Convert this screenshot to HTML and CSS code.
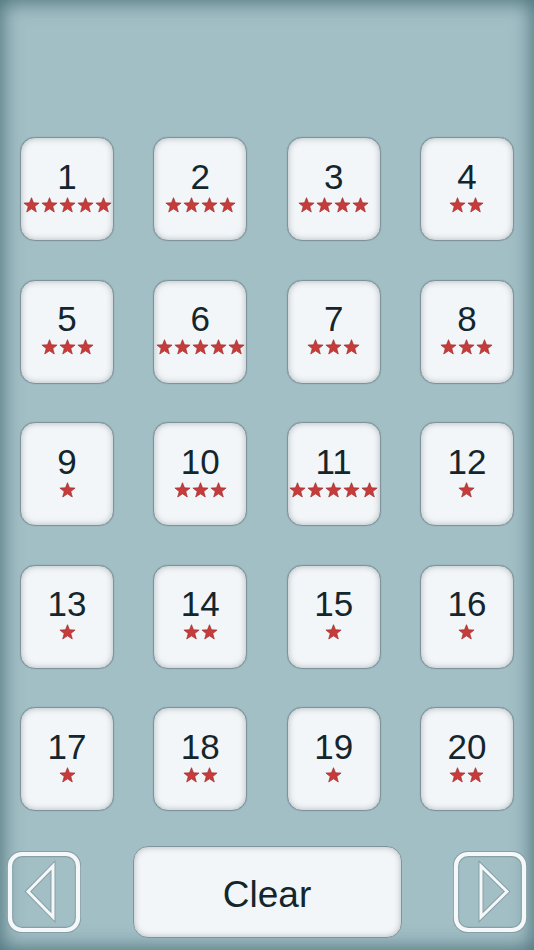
FILE: index.html
```html
<!DOCTYPE html>
<html>
<head>
<meta charset="utf-8">
<link rel="stylesheet" href="styles.css">
</head>
<body>
<svg class="defs" width="0" height="0">
  <defs>
    <symbol id="star" viewBox="0 0 20 19">
      <polygon points="10,0.8 12.4,6.9 19,7.2 13.9,11.3 15.7,17.8 10,14.1 4.3,17.8 6.1,11.3 1,7.2 7.6,6.9" fill="#c73b3b" stroke="#a02c2c" stroke-width="0.8" stroke-linejoin="round"/>
    </symbol>
  </defs>
</svg>
<div class="screen">
  <div class="grid" id="grid"></div>
  <div class="bar">
    <button class="nav">
      <svg width="74" height="82" viewBox="0 0 74 82">
        <rect x="3" y="3" width="68" height="76" rx="12" fill="none" stroke="#87a0a7" stroke-width="6.5"/>
        <rect x="3" y="3" width="68" height="76" rx="12" fill="none" stroke="#f5f8f9" stroke-width="4.2"/>
        <polygon points="21,40.5 46,15 46,66" fill="none" stroke="#87a0a7" stroke-width="5" stroke-linejoin="miter"/>
        <polygon points="21,40.5 46,15 46,66" fill="none" stroke="#f5f8f9" stroke-width="3" stroke-linejoin="miter"/>
      </svg>
    </button>
    <button class="clear">Clear</button>
    <button class="nav">
      <svg width="74" height="82" viewBox="0 0 74 82">
        <rect x="3" y="3" width="68" height="76" rx="12" fill="none" stroke="#87a0a7" stroke-width="6.5"/>
        <rect x="3" y="3" width="68" height="76" rx="12" fill="none" stroke="#f5f8f9" stroke-width="4.2"/>
        <polygon points="54,40.5 28,15 28,66" fill="none" stroke="#87a0a7" stroke-width="5" stroke-linejoin="miter"/>
        <polygon points="54,40.5 28,15 28,66" fill="none" stroke="#f5f8f9" stroke-width="3" stroke-linejoin="miter"/>
      </svg>
    </button>
  </div>
</div>
<script>
  var stars = [5,4,4,2,3,5,3,3,1,3,5,1,1,2,1,1,1,2,1,2];
  var g = document.getElementById('grid');
  var html = '';
  for (var i = 0; i < stars.length; i++) {
    var s = '';
    for (var j = 0; j < stars[i]; j++) s += '<svg class="star"><use href="#star"/></svg>';
    html += '<div class="tile"><div class="num">' + (i + 1) + '</div><div class="stars">' + s + '</div></div>';
  }
  g.innerHTML = html;
</script>
</body>
</html>
```
FILE: styles.css
```css
html, body {
  margin: 0;
  padding: 0;
}
body {
  width: 534px;
  height: 950px;
  overflow: hidden;
  font-family: "Liberation Sans", Arial, sans-serif;
}
.defs {
  position: absolute;
}
.screen {
  width: 534px;
  height: 950px;
  box-sizing: border-box;
  background: #a3bfc6;
  box-shadow: inset 0 0 20px 2px rgba(45, 85, 95, 0.75);
  padding-top: 137px;
}
.grid {
  display: grid;
  grid-template-columns: repeat(4, 94px);
  column-gap: 39.33px;
  row-gap: 38.5px;
  padding-left: 20px;
}
.tile {
  width: 94px;
  height: 104px;
  box-sizing: border-box;
  background: #f3f6f8;
  border: 1.5px solid #7f939a;
  border-radius: 15px;
  box-shadow: inset 0 0 6px rgba(80, 100, 108, 0.45), 0 0 1px rgba(60, 90, 100, 0.5);
  display: flex;
  flex-direction: column;
  align-items: center;
  padding-top: 20.5px;
}
.num {
  font-size: 35px;
  line-height: 35px;
  color: #13262d;
}
.stars {
  display: flex;
  gap: 1px;
  margin-top: 3px;
}
.star {
  width: 17px;
  height: 16px;
}
.bar {
  display: flex;
  justify-content: space-between;
  align-items: center;
  padding: 0 7px;
  margin-top: 35px;
  height: 92px;
}
.nav {
  width: 74px;
  height: 82px;
  padding: 0;
  margin: 0;
  border: none;
  background: none;
  display: block;
}
.nav svg {
  display: block;
}
.clear {
  width: 269px;
  height: 92px;
  margin: 0;
  padding: 5px 0 0;
  box-sizing: border-box;
  background: #f3f6f8;
  border: 1.5px solid #7f939a;
  border-radius: 15px;
  box-shadow: inset 0 0 6px rgba(80, 100, 108, 0.45);
  font-family: "Liberation Sans", Arial, sans-serif;
  font-size: 37px;
  color: #13262d;
}
```
